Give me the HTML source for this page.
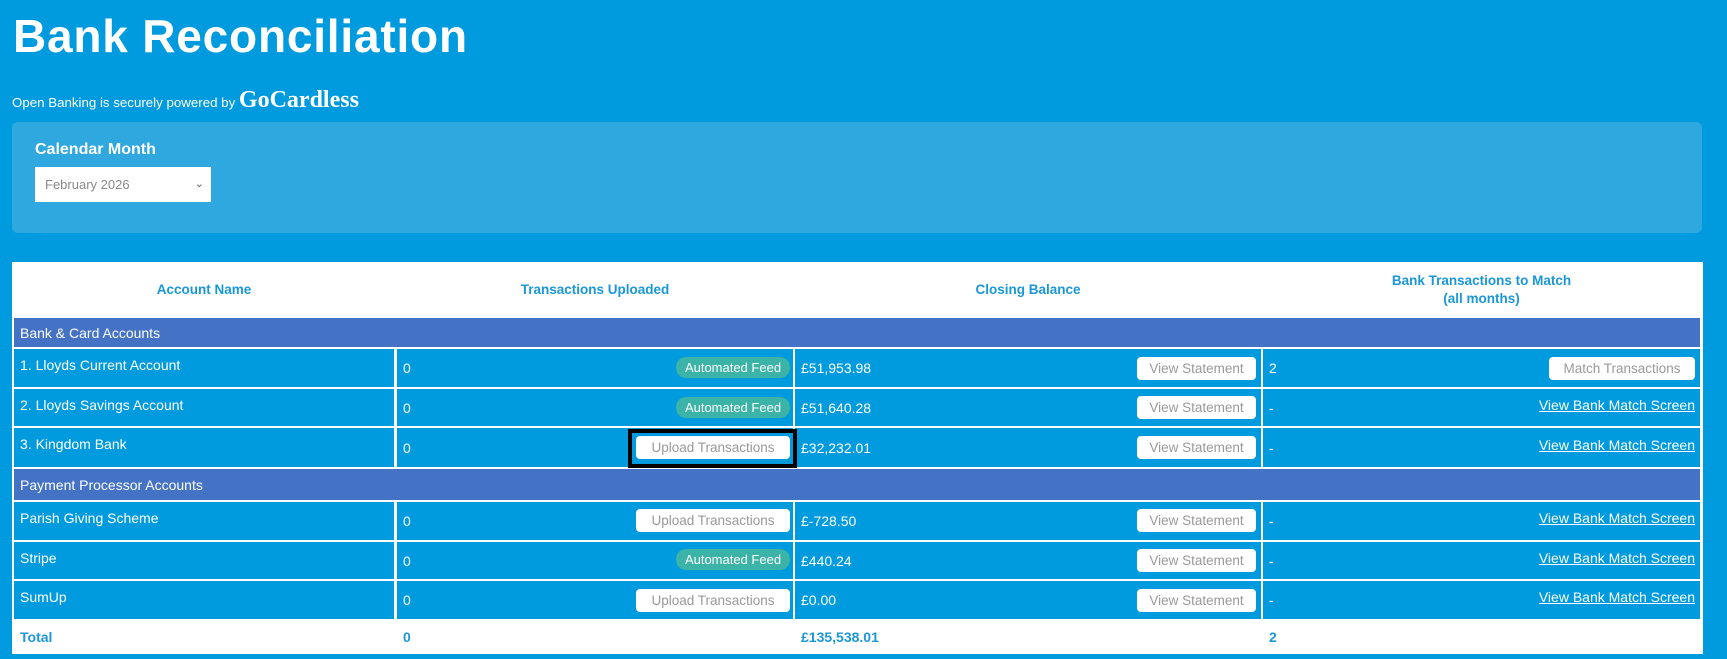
<!DOCTYPE html>
<html><head><meta charset="utf-8"><style>
*{margin:0;padding:0;box-sizing:border-box}
body{width:1727px;height:659px;background:#009bde;font-family:"Liberation Sans","DejaVu Sans",sans-serif;color:#fff;position:relative;overflow:hidden}
.a{position:absolute}
.c{position:absolute;background:#009bde;font-size:14px;display:flex;align-items:center;padding:0 6px}
.s{position:absolute;background:#4472c4;font-size:14px;display:flex;align-items:center;padding:0 6px;left:14px;width:1686px}
.h{position:absolute;color:#1b97d6;font-weight:bold;font-size:13.5px;text-align:center;line-height:18px}
.pill{position:absolute;background:#3bb3a7;border-radius:10px;font-size:13px;color:#fff;text-align:center;line-height:21px;height:21px}
.btn{position:absolute;background:#fff;border-radius:4px;font-size:13.5px;color:#999;text-align:center;line-height:23px;height:23px}
.lnk{position:absolute;font-size:14px;text-decoration:underline;text-align:right}
.t{position:absolute;color:#1b97d6;font-weight:bold;font-size:14px}
</style></head><body>
<div class="a" style="left:13px;top:9px;font-size:46px;font-weight:bold;letter-spacing:0.8px">Bank Reconciliation</div>
<div class="a" style="left:12px;top:87px;font-size:13.3px;white-space:nowrap">Open Banking is securely powered by <span style="font-family:'Liberation Serif',serif;font-weight:bold;font-size:24px;letter-spacing:0">GoCardless</span></div>
<div class="a" style="left:12px;top:122px;width:1690px;height:111px;background:#2fa8df;border-radius:6px"></div>
<div class="a" style="left:35px;top:141px;font-size:16px;font-weight:bold">Calendar Month</div>
<div class="a" style="left:35px;top:167px;width:176px;height:35px;background:#fff;color:#888;font-size:13px;line-height:35px;padding-left:10px">February 2026<span style="position:absolute;right:7px;top:0;color:#666;font-size:11px">&#8964;</span></div>

<div class="a" style="left:12px;top:262px;width:1691px;height:392px;background:#fff"></div>
<div class="h" style="left:14px;width:380px;top:281px">Account Name</div>
<div class="h" style="left:397px;width:396px;top:281px">Transactions Uploaded</div>
<div class="h" style="left:795px;width:466px;top:281px">Closing Balance</div>
<div class="h" style="left:1263px;width:437px;top:272px">Bank Transactions to Match<br>(all months)</div>

<div class="s" style="top:318px;height:29px">Bank &amp; Card Accounts</div>
<div class="s" style="top:469px;height:31px">Payment Processor Accounts</div>

<div class="c" style="left:14px;width:380px;top:349px;height:38px;align-items:flex-start;padding-top:8px">1. Lloyds Current Account</div>
<div class="c" style="left:397px;width:396px;top:349px;height:38px">0</div>
<div class="c" style="left:795px;width:466px;top:349px;height:38px">£51,953.98</div>
<div class="c" style="left:1263px;width:437px;top:349px;height:38px">2</div>

<div class="c" style="left:14px;width:380px;top:389px;height:37px;align-items:flex-start;padding-top:8px">2. Lloyds Savings Account</div>
<div class="c" style="left:397px;width:396px;top:389px;height:37px">0</div>
<div class="c" style="left:795px;width:466px;top:389px;height:37px">£51,640.28</div>
<div class="c" style="left:1263px;width:437px;top:389px;height:37px">-</div>

<div class="c" style="left:14px;width:380px;top:428px;height:39px;align-items:flex-start;padding-top:8px">3. Kingdom Bank</div>
<div class="c" style="left:397px;width:396px;top:428px;height:39px">0</div>
<div class="c" style="left:795px;width:466px;top:428px;height:39px">£32,232.01</div>
<div class="c" style="left:1263px;width:437px;top:428px;height:39px">-</div>

<div class="c" style="left:14px;width:380px;top:502px;height:38px;align-items:flex-start;padding-top:8px">Parish Giving Scheme</div>
<div class="c" style="left:397px;width:396px;top:502px;height:38px">0</div>
<div class="c" style="left:795px;width:466px;top:502px;height:38px">£-728.50</div>
<div class="c" style="left:1263px;width:437px;top:502px;height:38px">-</div>

<div class="c" style="left:14px;width:380px;top:542px;height:37px;align-items:flex-start;padding-top:8px">Stripe</div>
<div class="c" style="left:397px;width:396px;top:542px;height:37px">0</div>
<div class="c" style="left:795px;width:466px;top:542px;height:37px">£440.24</div>
<div class="c" style="left:1263px;width:437px;top:542px;height:37px">-</div>

<div class="c" style="left:14px;width:380px;top:581px;height:38px;align-items:flex-start;padding-top:8px">SumUp</div>
<div class="c" style="left:397px;width:396px;top:581px;height:38px">0</div>
<div class="c" style="left:795px;width:466px;top:581px;height:38px">£0.00</div>
<div class="c" style="left:1263px;width:437px;top:581px;height:38px">-</div>

<div class="pill" style="left:676px;width:114px;top:357px">Automated Feed</div>
<div class="pill" style="left:676px;width:114px;top:397px">Automated Feed</div>
<div class="pill" style="left:676px;width:114px;top:549px">Automated Feed</div>
<div class="a" style="left:628px;top:429px;width:169px;height:39px;border:4px solid #000"></div>
<div class="btn" style="left:636px;width:154px;top:436px">Upload Transactions</div>
<div class="btn" style="left:636px;width:154px;top:509px">Upload Transactions</div>
<div class="btn" style="left:636px;width:154px;top:589px">Upload Transactions</div>

<div class="btn" style="left:1137px;width:119px;top:357px">View Statement</div>
<div class="btn" style="left:1137px;width:119px;top:396px">View Statement</div>
<div class="btn" style="left:1137px;width:119px;top:436px">View Statement</div>
<div class="btn" style="left:1137px;width:119px;top:509px">View Statement</div>
<div class="btn" style="left:1137px;width:119px;top:549px">View Statement</div>
<div class="btn" style="left:1137px;width:119px;top:589px">View Statement</div>

<div class="btn" style="left:1549px;width:146px;top:357px">Match Transactions</div>
<div class="lnk" style="left:1400px;width:295px;top:397px">View Bank Match Screen</div>
<div class="lnk" style="left:1400px;width:295px;top:437px">View Bank Match Screen</div>
<div class="lnk" style="left:1400px;width:295px;top:510px">View Bank Match Screen</div>
<div class="lnk" style="left:1400px;width:295px;top:550px">View Bank Match Screen</div>
<div class="lnk" style="left:1400px;width:295px;top:589px">View Bank Match Screen</div>

<div class="t" style="left:20px;top:629px">Total</div>
<div class="t" style="left:403px;top:629px">0</div>
<div class="t" style="left:801px;top:629px">£135,538.01</div>
<div class="t" style="left:1269px;top:629px">2</div>
</body></html>
